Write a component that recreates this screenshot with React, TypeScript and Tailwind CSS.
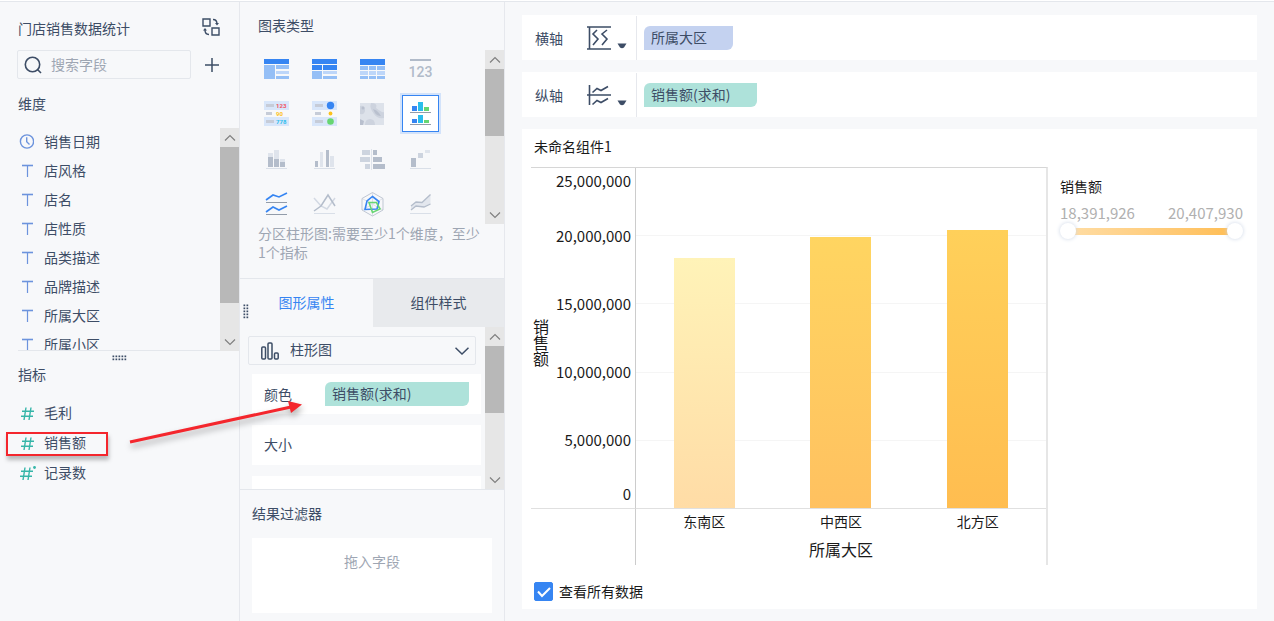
import { useState, type ReactNode } from "react";

const dimensions = ["销售日期", "店风格", "店名", "店性质", "品类描述", "品牌描述", "所属大区", "所属小区"];

const measures = [
  { name: "毛利" },
  { name: "销售额", highlighted: true },
  { name: "记录数", computed: true },
];

const bars = [
  { name: "东南区", value: 18391926, fill: "from-[#fff3b8] to-[#ffdca6]" },
  { name: "中西区", value: 19960000, fill: "from-[#ffd561] to-[#ffc160]" },
  { name: "北方区", value: 20407930, fill: "from-[#ffd05a] to-[#ffbd50]" },
];

const AXIS_MAX = 25000000;
const middleTicks = ["20,000,000", "15,000,000", "10,000,000", "5,000,000"];

/* ---------- small icons ---------- */

const TextIcon = () => (
  <svg className="h-4 w-4" viewBox="0 0 16 16" fill="none" stroke="#6c93dd">
    <path d="M4 3.500h11" strokeWidth="1.6" />
    <path d="M9.500 4v11" strokeWidth="1.2" />
  </svg>
);

const ClockIcon = () => (
  <svg className="h-4 w-4" viewBox="0 0 16 16" fill="none" stroke="#6c93dd" strokeWidth="1.4">
    <circle cx="9" cy="8.500" r="6.600" />
    <path d="M8.700 4.300v4.500l2.800 2.600" />
  </svg>
);

const HashIcon = ({ dot = false }: { dot?: boolean }) => (
  <svg className="h-4 w-[18px]" viewBox="0 0 18 16" fill="none" stroke="#35b5a8" strokeWidth="1.4">
    <g transform={dot ? "translate(0 1)" : "translate(1 1)"}>
      <path d="M7 2.500 5 15M12 2.500 10 15M3 6.200h12M2 11.200h12" />
      {dot && <circle cx="16.500" cy="2.500" r="1.400" fill="#35b5a8" stroke="none" />}
    </g>
  </svg>
);

const Chevron = ({ up = false }: { up?: boolean }) => (
  <svg className="h-3 w-3" viewBox="0 0 12 12" fill="none" stroke="#808080" strokeWidth="1.200">
    <path d={up ? "M1 8.500 6 3.500l5 5" : "M1 3.500l5 5 5-5"} />
  </svg>
);

const Caret = () => (
  <svg className="mt-4 h-[6px] w-[10px]" viewBox="0 0 10 6" fill="#3d4d66">
    <path d="M0.500 0.500h9L7 4.500Q5 6 3 4.500z" />
  </svg>
);

const Dots = ({ vertical = false }: { vertical?: boolean }) => (
  <svg
    className={vertical ? "h-[15px] w-[6px]" : "h-[6px] w-[15px]"}
    viewBox={vertical ? "0 0 6 15" : "0 0 15 6"}
    fill="#3d4d66"
  >
    {[0, 3, 6, 9, 12].map((p) =>
      [0, 3].map((q) => (
        <rect key={`${p}-${q}`} x={vertical ? q + 0.5 : p + 0.5} y={vertical ? p + 0.5 : q + 0.5} width="1.700" height="1.700" />
      ))
    )}
  </svg>
);

const Scrollbar = ({ thumb }: { thumb: string }) => (
  <div className="flex w-[19px] shrink-0 flex-col bg-[#e6e6e6]">
    <span className="flex h-[19px] shrink-0 items-center justify-center">
      <Chevron up />
    </span>
    <span className={`bg-[#b8b8b8] ${thumb}`} />
    <span className="mt-auto flex h-[19px] shrink-0 items-center justify-center">
      <Chevron />
    </span>
  </div>
);

/* ---------- chart type icons, all on a 26px grid ---------- */

const Baseline = () => <path d="M3 22.500h21" stroke="#d9dfe8" />;

const chartTypes: { name: string; icon: ReactNode }[] = [
  {
    name: "分组表",
    icon: (
      <>
        <path d="M1 3h25v5H1z" fill="#3685f2" />
        <path d="M1 9h11v14H1zM13 9h13v4H13zM13 20h13v3H13z" fill="#95bff6" />
        <path d="M13 15h13v3H13z" fill="#bdd6f9" />
      </>
    ),
  },
  {
    name: "交叉表",
    icon: (
      <>
        <path d="M1 3h25v5H1zM1 9h10v5H1zM12 9h14v5H12z" fill="#3685f2" />
        <path d="M1 15h10v8H1zM12 20h14v3H12z" fill="#95bff6" />
        <path d="M12 15h14v3H12z" fill="#bdd6f9" />
      </>
    ),
  },
  {
    name: "明细表",
    icon: (
      <>
        <path d="M1 3h25v6H1z" fill="#3685f2" />
        <path d="M1 10h8v4H1zM10 10h7v4h-7zM18 10h8v4h-8zM1 20h8v3H1zM10 20h7v3h-7zM18 20h8v3h-8z" fill="#95bff6" />
        <path d="M1 15h8v4H1zM10 15h7v4h-7zM18 15h8v4h-8z" fill="#bdd6f9" />
      </>
    ),
  },
  {
    name: "KPI指标卡",
    icon: (
      <>
        <path d="M3 4h21" stroke="#b1bbc9" strokeWidth="2" />
        <text x="13.500" y="21" textAnchor="middle" fill="#b1bbc9" className="font-['Roboto',sans-serif] text-[14px] font-medium">
          123
        </text>
      </>
    ),
  },
  {
    name: "颜色表格",
    icon: (
      <>
        <path d="M1 0h25v9H1zM1 16h25v9H1z" fill="#d8e6fa" />
        <path d="M3 3h8v3H3zM3 11h6v3H3zM3 19h8v3H3z" fill="#c6ccd8" />
        <g className="font-['Roboto',sans-serif] text-[6px] font-bold">
          <text x="13" y="7" fill="#f0525f">123</text>
          <text x="13" y="15" fill="#fcc11c">90</text>
          <text x="13" y="23" fill="#2bbdec">778</text>
        </g>
      </>
    ),
  },
  {
    name: "热力点表格",
    icon: (
      <>
        <path d="M1 0h25v9H1zM1 16h25v9H1z" fill="#d8e6fa" />
        <path d="M4 3h8v3H4zM4 11h6v3H4zM4 19h8v3H4z" fill="#c6ccd8" />
        <circle cx="19.500" cy="4.500" r="3.700" fill="#3685f2" />
        <circle cx="19.500" cy="12.500" r="1.900" fill="#fcc11c" />
        <circle cx="19.500" cy="20.500" r="3.300" fill="#67d672" />
      </>
    ),
  },
  {
    name: "热力区域图",
    icon: (
      <>
        <path d="M1 2h24v22H1z" fill="#dde2ea" />
        <path d="M1 5q5-1 5 4t-5 4zM12 2q7 0 5 5 6 5 8 4v6q-7 1-10-4-5-6-3-11zM6 24q0-6 5-6t5 6z" fill="#cdd3de" />
        <path d="M14 8q4 1 6 4l2 3q-4 0-6-3zM1 18l4 2-1 4H1z" fill="#b9c0ce" />
        <circle cx="4" cy="7" r="1.500" fill="#b9c0ce" />
      </>
    ),
  },
  {
    name: "分区柱形图",
    icon: (
      <>
        <path d="M5 5h5v5H5zM5 18h5v4H5z" fill="#3685f2" />
        <path d="M11 1h5v9h-5zM11 14h5v8h-5z" fill="#2bbdec" />
        <path d="M17 6h5v4h-5zM17 19h5v3h-5z" fill="#67d672" />
        <path d="M3 11.500h21M3 23.500h21" stroke="#929caa" />
      </>
    ),
  },
  {
    name: "堆积柱形图",
    icon: (
      <>
        <path d="M5 7h5v5H5zM11 4h5v9h-5zM17 13h5v3h-5z" fill="#dfe4ec" />
        <path d="M5 11h5v10H5zM11 13h5v8h-5zM17 16h5v5h-5z" fill="#b4bdcb" />
        <Baseline />
      </>
    ),
  },
  {
    name: "多系列柱形图",
    icon: (
      <>
        <path d="M9 6h3v15H9zM19 10h4v11h-4z" fill="#dfe4ec" />
        <path d="M4 15h3v6H4zM15 4h3v17h-3z" fill="#b4bdcb" />
        <Baseline />
      </>
    ),
  },
  {
    name: "对比柱状图",
    icon: (
      <>
        <path d="M3 4h8v5H3zM1 11h10v5H1zM6 18h5v5H6z" fill="#cdd4df" />
        <path d="M14 4h4v5h-4zM14 11h9v5h-9zM14 18h12v5H14z" fill="#b4bdcb" />
        <path d="M12.500 3v21" stroke="#dfe4ec" />
      </>
    ),
  },
  {
    name: "瀑布图",
    icon: (
      <>
        <path d="M4 12h5v9H4z" fill="#b4bdcb" />
        <path d="M11 7h5v5h-5z" fill="#cdd4df" />
        <path d="M18 4h5v3h-5z" fill="#dfe4ec" />
        <Baseline />
      </>
    ),
  },
  {
    name: "分区折线图",
    icon: (
      <>
        <path d="M3 9l7-5 6 2 8-4M3 21l7-5 6 3 8-4" stroke="#3685f2" strokeWidth="1.600" />
        <path d="M3 11.500h21M3 23.500h21" stroke="#929caa" />
      </>
    ),
  },
  {
    name: "多系列折线图",
    icon: (
      <>
        <path d="M3 7l7 8 6 3 8-11" stroke="#d3d9e3" strokeWidth="1.500" />
        <path d="M3 20l7-5 7-11 7 11" stroke="#b4bdcb" strokeWidth="1.500" />
        <Baseline />
      </>
    ),
  },
  {
    name: "雷达图",
    icon: (
      <>
        <path d="M3 7.500l21 11.500M24 7.500 3 19M13.500 1.500V25" stroke="#dde1e9" />
        <path d="M13.500 1.500 24 7.500v11.500L13.500 25 3 19V7.500z" stroke="#c0c7d3" />
        <path d="M13.500 5.500 20 10.500 18 18 6 18.500 8 10z" stroke="#3685f2" strokeWidth="1.600" />
        <path d="M10 11.500h7.500L21 18l-7.500 3.500z" stroke="#67d672" strokeWidth="1.600" />
      </>
    ),
  },
  {
    name: "范围面积图",
    icon: (
      <>
        <path d="M4 15l5-4 6 .5 8.500-8V13L17 16l-8-1-5 4z" fill="#e3e7ee" />
        <path d="M4 15l5-4 6 .5 8.500-8M4 19l5-4 8 1 6.500-3" stroke="#b4bdcb" strokeWidth="1.300" />
        <Baseline />
      </>
    ),
  },
];

/* ---------- left column ---------- */

const FieldPanel = () => (
  <aside className="flex w-[240px] shrink-0 flex-col border-r border-[#e6e8ed]">
    <div className="flex items-start justify-between pt-[14px] pr-[19px] pl-[18px]">
      <h1 className="leading-6">门店销售数据统计</h1>
      <button type="button" aria-label="切换数据" className="mt-[2px]">
        <svg className="h-[18px] w-[18px]" viewBox="0 0 18 18" fill="none" stroke="#3d4d66" strokeWidth="1.400">
          <path d="M1 1h7v7H1zM10 10h7v7h-7z" />
          <path d="M11 1.500q4 0 4 4.500M7 16.500q-4 0-4-4.500" />
          <path d="M13 5h4l-2 2.500zM1 12.500h4L3 10z" fill="#3d4d66" stroke="none" />
        </svg>
      </button>
    </div>
    <div className="mt-[10px] flex items-center justify-between pr-[19px] pl-[17px]">
      <label className="flex h-[29px] w-[174px] items-center gap-2 rounded-xs border border-[#e4e7ec] px-[6px]">
        <svg className="h-[18px] w-[18px] shrink-0" viewBox="0 0 18 18" fill="none" stroke="#3d4d66" strokeWidth="1.600">
          <circle cx="8.500" cy="8.500" r="7.200" />
          <path d="M13.500 13.500l3.500 3.500" />
        </svg>
        <input type="text" aria-label="搜索字段" placeholder="搜索字段" className="w-full min-w-0 bg-transparent pb-[2px] pl-[1px] placeholder:text-[#9ea6b3] focus:outline-none" />
      </label>
      <button type="button" aria-label="添加字段">
        <svg className="h-4 w-4" viewBox="0 0 16 16" stroke="#3d4d66" strokeWidth="1.500">
          <path d="M8 1v14M1 8h14" />
        </svg>
      </button>
    </div>
    <h2 className="mt-[12px] pl-[18px] leading-6">维度</h2>
    <div className="mt-[13px] flex h-[223px] pl-[18px]">
      <ul className="min-w-0 flex-1 overflow-hidden border-b border-[#e4e7ec]">
        {dimensions.map((name, i) => (
          <li key={name} className="flex h-[29px] items-center gap-[10px] pb-[3px]">
            {i === 0 ? <ClockIcon /> : <TextIcon />}
            {name}
          </li>
        ))}
      </ul>
      <Scrollbar thumb="h-[156px]" />
    </div>
    <div className="flex justify-center pt-1">
      <Dots />
    </div>
    <h2 className="mt-[1px] pl-[18px] leading-6">指标</h2>
    <ul className="mt-[11px]">
      {measures.map((m) => (
        <li key={m.name} className="relative flex h-[30px] items-center gap-2 pl-[18px]">
          <HashIcon dot={m.computed} />
          {m.name}
          {m.highlighted && (
            <span className="absolute top-[5px] left-[6px] h-[24px] w-[102px] border-2 border-[#f4262d] shadow-[1px_4px_4px_#00000040]" />
          )}
        </li>
      ))}
    </ul>
  </aside>
);

/* ---------- middle column ---------- */

const SettingsPanel = () => {
  const [type, setType] = useState("分区柱形图");
  const [tab, setTab] = useState("图形属性");

  return (
    <section className="flex w-[265px] shrink-0 flex-col border-r border-[#e6e8ed]">
      <h2 className="pt-[11px] pl-[18px] leading-6">图表类型</h2>
      <div className="mt-[13px] flex h-[174px]">
        <div className="-mt-1 grid min-w-0 flex-1 auto-rows-[45px] grid-cols-[repeat(4,48px)] pl-3">
          {chartTypes.map((t) => (
            <button
              key={t.name}
              type="button"
              aria-label={t.name}
              onClick={() => setType(t.name)}
              className="flex items-center justify-center"
            >
              <span
                className={`flex h-[37px] w-[37px] items-center justify-center ${
                  t.name === type ? "border border-[#3685f2] bg-white ring-2 ring-[#d3e3fa]" : ""
                }`}
              >
                <svg className="h-[26px] w-[26px]" viewBox="0 0 26 26" fill="none">
                  {t.icon}
                </svg>
              </span>
            </button>
          ))}
        </div>
        <Scrollbar thumb="h-[67px]" />
      </div>
      <p className="h-[54px] pr-[18px] pl-[18px] leading-[19px] text-[#9ea6b3]">
        分区柱形图:需要至少1个维度，至少1个指标
      </p>

      <div className="relative grid h-[49px] grid-cols-[133px_1fr] border-t border-[#e4e7ec]">
        {["图形属性", "组件样式"].map((name) => (
          <button
            key={name}
            type="button"
            onClick={() => setTab(name)}
            className={`pb-[2px] ${name === tab ? "text-[#3685f2]" : "bg-[#e8eaed]"}`}
          >
            {name}
          </button>
        ))}
        <span className="absolute top-[25px] left-[3px]">
          <Dots vertical />
        </span>
      </div>

      <div className="flex h-[163px] border-b border-[#e4e7ec]">
        <div className="min-w-0 flex-1 overflow-hidden pr-[4px] pl-2">
          <div className="relative mt-[9px] mr-[5px]">
            <select aria-label="图形" className="h-[29px] w-full appearance-none rounded-xs border border-[#e4e7ec] bg-transparent pb-[3px] pl-[41px]">
              <option>柱形图</option>
              <option>线</option>
              <option>点</option>
            </select>
            <svg className="pointer-events-none absolute top-[6px] left-[13px] h-[18px] w-[18px]" viewBox="0 0 18 18" fill="none" stroke="#3d4d66" strokeWidth="1.500">
              <rect x="0.800" y="5" width="3.700" height="12" rx="1" />
              <rect x="7" y="1" width="4" height="16" rx="1" />
              <rect x="13.500" y="11" width="3.700" height="6" rx="1" />
            </svg>
            <svg className="pointer-events-none absolute top-[11px] right-[7px] h-2 w-[14px]" viewBox="0 0 14 8" fill="none" stroke="#3d4d66" strokeWidth="1.500">
              <path d="M0.500 0.800 7 7l6.500-6.200" />
            </svg>
          </div>
          <div className="mt-[9px] ml-1 flex flex-col gap-[11px]">
            <div className="flex h-10 items-center bg-white px-3">
              <span className="w-[61px]">颜色</span>
              <Pill className="w-[144px] bg-[#aee2da]">销售额(求和)</Pill>
            </div>
            <div className="flex h-10 items-center bg-white px-3 pb-[2px]">大小</div>
            <div className="h-10 bg-white" />
          </div>
        </div>
        <Scrollbar thumb="h-[67px]" />
      </div>

      <h2 className="mt-[11px] pl-3 leading-6">结果过滤器</h2>
      <div className="mx-3 mt-[13px] h-[75px] bg-white pt-[11px] text-center leading-6 text-[#9ea6b3]">拖入字段</div>
    </section>
  );
};

const Pill = ({ className, children }: { className: string; children: ReactNode }) => (
  <span className={`flex h-6 items-center rounded-tl-md rounded-br-md px-[7px] pb-[2px] ${className}`}>{children}</span>
);

/* ---------- right column ---------- */

const AxisRow = ({ label, icon, children }: { label: string; icon: ReactNode; children: ReactNode }) => (
  <div className="flex h-[45px] shrink-0 items-center bg-white pl-[13px]">
    <span className="w-[52px]">{label}</span>
    <button type="button" aria-label={`${label}设置`} className="flex w-[49px] items-center gap-[6px]">
      <svg className="h-6 w-6" viewBox="0 0 24 24" fill="none" stroke="#3d4d66" strokeWidth="1.600">
        {icon}
      </svg>
      <Caret />
    </button>
    <span className="mr-[7px] h-11 w-px bg-[#e6e8ed]" />
    {children}
  </div>
);

const thumbStyle =
  "pointer-events-none absolute inset-0 h-4 w-full appearance-none bg-transparent [&::-webkit-slider-thumb]:pointer-events-auto [&::-webkit-slider-thumb]:h-4 [&::-webkit-slider-thumb]:w-4 [&::-webkit-slider-thumb]:appearance-none [&::-webkit-slider-thumb]:rounded-full [&::-webkit-slider-thumb]:bg-white [&::-webkit-slider-thumb]:shadow-[0_0_4px_#ccd6e6]";

const Legend = () => (
  <div className="mr-[14px] ml-3 w-[183px] shrink-0 pt-[7px] text-[#1a1a1a]">
    <div className="leading-6">销售额</div>
    <div className="mt-1 flex justify-between text-[15px] leading-[22px] text-[#b0b0b0]">
      <span>18,391,926</span>
      <span>20,407,930</span>
    </div>
    <div className="relative -mt-px flex h-4 items-center px-2">
      <span className="h-[7px] flex-1 bg-linear-to-r from-[#ffdda4] to-[#ffbd52]" />
      <input type="range" aria-label="最小值" min={18391926} max={20407930} defaultValue={18391926} className={thumbStyle} />
      <input type="range" aria-label="最大值" min={18391926} max={20407930} defaultValue={20407930} className={thumbStyle} />
    </div>
  </div>
);

const BarChart = () => (
  <div className="grid min-w-0 flex-1 grid-cols-[105px_1fr] grid-rows-[1fr_56px] border-t border-r-2 border-t-[#d6d6d6] border-r-[#e6e6e6]">
    <div className="flex border-r border-b border-r-[#cccccc] border-b-[#e0e0e0]">
      <div className="flex w-[21px] items-center pt-2 pl-[2px]">
        <span className="w-4 text-base leading-4">销售额</span>
      </div>
      <div className="flex flex-1 flex-col pr-1 text-right text-[15px] leading-[22px]">
        <div className="flex-1 basis-0">
          <div className="pt-[2px]">25,000,000</div>
        </div>
        {middleTicks.map((t) => (
          <div key={t} className="flex flex-[2] basis-0 items-center justify-end">
            {t}
          </div>
        ))}
        <div className="flex flex-1 basis-0 items-end justify-end">
          <div className="pb-[3px]">0</div>
        </div>
      </div>
    </div>
    <div className="relative border-b border-[#e0e0e0]">
      <div className="absolute inset-0 flex flex-col">
        {middleTicks.map((t) => (
          <span key={t} className="flex-1 border-b border-[#f5f5f5]" />
        ))}
        <span className="flex-1" />
      </div>
      <div className="absolute inset-0 grid grid-cols-3 items-end justify-items-center">
        {bars.map((b) => (
          <div
            key={b.name}
            className={`w-[61px] bg-linear-to-b ${b.fill}`}
            style={{ height: `${(b.value / AXIS_MAX) * 100}%` }}
          />
        ))}
      </div>
    </div>
    <div className="border-r border-[#cccccc]" />
    <div>
      <div className="grid grid-cols-3 text-center leading-6">
        {bars.map((b) => (
          <span key={b.name}>{b.name}</span>
        ))}
      </div>
      <div className="pt-1 text-center text-base leading-6">所属大区</div>
    </div>
  </div>
);

const App = () => (
  <div className="relative flex min-h-screen flex-col bg-[#f7f8fa] font-['Noto_Sans_CJK_SC',sans-serif] text-sm text-[#3d4d66]">
    <div className="h-[2px] shrink-0 border-b border-[#e4e7ec] bg-white" />
    <div className="flex flex-1">
      <FieldPanel />
      <SettingsPanel />
      <main className="flex min-w-0 flex-1 flex-col gap-3 pt-[13px] pr-[17px] pb-3 pl-[17px]">
        <AxisRow label="横轴" icon={<path d="M0 1h24M0 23h24M2.500 1v22M10 4 6 8l5 5-5 6M20 4l-5 4 5 5-5 6" />}>
          <Pill className="w-[89px] bg-[#c4d2f0]">所属大区</Pill>
        </AxisRow>
        <AxisRow label="纵轴" icon={<path d="M2.500 2v20M0 12h24M5.500 9.500 10 5.500l4 2 7-4M5.500 21.500l4.500-4 4 2 7-4" />}>
          <Pill className="w-[113px] bg-[#aee2da]">销售额(求和)</Pill>
        </AxisRow>
        <section className="flex flex-1 flex-col bg-white text-[#1a1a1a]">
          <h2 className="pb-1 pl-3 leading-[34px]">未命名组件1</h2>
          <div className="flex flex-1 pl-[9px]">
            <BarChart />
            <Legend />
          </div>
          <label className="flex h-11 items-center gap-[6px] pt-2 pl-3">
            <span className="relative h-[19px] w-[19px]">
              <input type="checkbox" defaultChecked className="peer block h-full w-full appearance-none rounded-xs border border-[#c5ccd8] checked:border-[#3685f2] checked:bg-[#3685f2]" />
              <svg className="pointer-events-none absolute inset-0 hidden peer-checked:block" viewBox="0 0 19 19" fill="none" stroke="white" strokeWidth="2">
                <path d="M4 9.500l4 4.500 8-8" />
              </svg>
            </span>
            查看所有数据
          </label>
        </section>
      </main>
    </div>

    {/* drag hint from the measure to the colour slot */}
    <svg
      className="pointer-events-none absolute top-[395px] left-[125px] h-[60px] w-[185px] drop-shadow-[1px_4px_3px_#00000055]"
      viewBox="0 0 185 60"
    >
      <path d="M5 47 166 12" stroke="#f4262d" strokeWidth="3" />
      <path d="M163 6 177 9.500 166 18z" fill="#f4262d" />
    </svg>
  </div>
);

export default App;
